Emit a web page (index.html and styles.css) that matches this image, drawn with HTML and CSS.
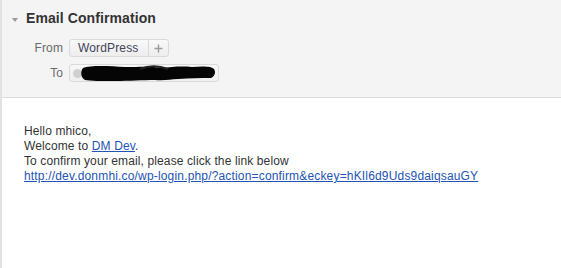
FILE: index.html
```html
<!DOCTYPE html>
<html>
<head>
<meta charset="utf-8">
<link rel="stylesheet" href="styles.css">
</head>
<body>
<div class="pane">
  <div class="header">
    <div class="title-row">
      <span class="caret"></span>
      <h1 class="title">Email Confirmation</h1>
    </div>
    <div class="fields">
      <div class="label">From</div>
      <div class="value">
        <div class="chip">
          <span class="chip-text">WordPress</span>
          <span class="chip-add">
            <svg width="9" height="9" viewBox="0 0 9 9"><path d="M4.5 0.5v8M0.5 4.5h8" stroke="#9a9a9a" stroke-width="1.4" fill="none"/></svg>
          </span>
        </div>
      </div>
      <div class="label">To</div>
      <div class="value">
        <div class="chip chip-to">
          <span class="dot"></span>
          <svg class="redact" width="136" height="17" viewBox="0 0 136 17"><path d="M3 3 C10 0 30 1 45 2 C60 2 70 1 82 3 C92 2 100 1 112 2 C122 1 132 1 134 4 C136 7 135 11 131 13 C120 13 110 13 98 14 C90 14 85 16 75 15 C62 15 50 16 35 16 C22 16 10 16 5 15 C1 13 0 7 3 3 Z" fill="#050505"/><path d="M60 4 C70 0 80 1 88 4" stroke="#222" stroke-width="2" fill="none"/></svg>
        </div>
      </div>
    </div>
  </div>
  <div class="body">
    <p class="msg">Hello mhico,<br>Welcome to <a href="#">DM Dev</a>.<br>To confirm your email, please click the link below<br><a class="url" href="#">http://dev.donmhi.co/wp-login.php/?action=confirm&amp;eckey=hKIl6d9Uds9daiqsauGY</a></p>
  </div>
</div>
</body>
</html>
```

FILE: styles.css
```css
html, body {
  margin: 0;
  padding: 0;
  background: #ffffff;
}
body {
  font-family: "Liberation Sans", Arial, sans-serif;
  font-size: 12px;
  color: #333333;
}
.pane {
  border-left: 2px solid #e2e2e2;
  height: 268px;
  box-sizing: border-box;
}
.header {
  background: #f4f4f4;
  border-bottom: 1px solid #dcdcdc;
  padding: 10px 0 15px 0;
}
.title-row {
  display: flex;
  align-items: center;
  height: 17px;
}
.caret {
  width: 0;
  height: 0;
  margin-left: 10px;
  margin-right: 8px;
  margin-top: 2px;
  border-left: 3px solid transparent;
  border-right: 3px solid transparent;
  border-top: 4px solid #9a9a9a;
}
.title {
  margin: 0;
  font-size: 14px;
  font-weight: bold;
  line-height: 17px;
  color: #333333;
  letter-spacing: 0.09px;
}
.fields {
  display: grid;
  grid-template-columns: 34px auto;
  column-gap: 6px;
  row-gap: 7px;
  margin-top: 12px;
  padding-left: 27px;
  align-items: center;
}
.label {
  text-align: right;
  color: #6a6a6a;
  line-height: 18px;
  letter-spacing: 0.1px;
}
.value {
  display: flex;
}
.chip {
  display: flex;
  height: 18px;
  box-sizing: border-box;
  border: 1px solid #d9d9d9;
  border-radius: 3px;
  background: linear-gradient(#f9f9f9, #ededed);
}
.chip-text {
  width: 78px;
  box-sizing: border-box;
  padding-left: 8px;
  line-height: 16px;
  color: #44445a;
  letter-spacing: 0.15px;
}
.chip-add {
  width: 19px;
  border-left: 1px solid #d9d9d9;
  display: flex;
  align-items: center;
  justify-content: center;
}
.chip-to {
  width: 150px;
  align-items: center;
  background: linear-gradient(#f7f7f7, #efefef);
}
.dot {
  width: 9px;
  height: 9px;
  border-radius: 50%;
  background: #d0d0d0;
  margin-left: 3px;
}
.redact {
  margin-left: -2px;
}
.body {
  padding: 26px 0 0 22px;
}
.msg {
  margin: 0;
  line-height: 15px;
  letter-spacing: 0.12px;
}
.msg a {
  color: #2354b4;
  text-decoration: underline;
}
.msg .url {
  letter-spacing: 0.17px;
}
```
